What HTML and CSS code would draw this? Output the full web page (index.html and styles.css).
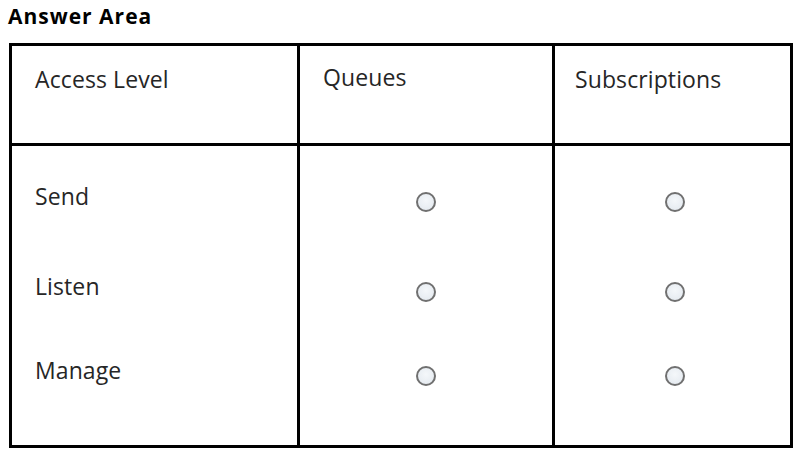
FILE: index.html
```html
<!DOCTYPE html>
<html>
<head>
<meta charset="utf-8">
<link rel="stylesheet" href="styles.css">
</head>
<body>
<h1 class="title">Answer Area</h1>
<div class="answer">
  <div class="cell head">Access Level</div>
  <div class="cell head col2 head-q">Queues</div>
  <div class="cell head col3">Subscriptions</div>

  <div class="cell label first">Send</div>
  <div class="cell col2 radio-cell first"><span class="radio"></span></div>
  <div class="cell col3 radio-cell first"><span class="radio"></span></div>

  <div class="cell label">Listen</div>
  <div class="cell col2 radio-cell"><span class="radio"></span></div>
  <div class="cell col3 radio-cell"><span class="radio"></span></div>

  <div class="cell label">Manage</div>
  <div class="cell col2 radio-cell"><span class="radio"></span></div>
  <div class="cell col3 radio-cell"><span class="radio"></span></div>
</div>
</body>
</html>
```

FILE: styles.css
```css
html, body {
  margin: 0;
  padding: 0;
  background: #fff;
}
body {
  font-family: "Open Sans", "Noto Sans", sans-serif;
  color: #222;
  width: 800px;
  height: 453px;
  overflow: hidden;
}
.title {
  margin: 2px 0 0 8px;
  font-size: 21px;
  line-height: 28px;
  font-weight: 700;
  color: #000;
  letter-spacing: 1px;
}
.answer {
  margin: 13px 0 0 9px;
  width: 778px;
  border: 3px solid #000;
  display: grid;
  grid-template-columns: 285px 255px 238px;
  grid-template-rows: 100px 125px 84px 90px;
}
.cell {
  box-sizing: border-box;
  font-size: 23px;
  line-height: 30px;
  padding-left: 23px;
  letter-spacing: 0.1px;
  color: #262626;
}
.col2, .col3 {
  border-left: 3px solid #000;
}
.col3 {
  padding-left: 20px;
}
.head {
  border-bottom: 3px solid #000;
  padding-top: 18px;
}
.head-q {
  padding-top: 16px;
}
.first {
  padding-top: 35px;
}
.radio-cell {
  display: flex;
  justify-content: center;
  align-items: flex-start;
  padding-left: 0;
}
.col3.radio-cell {
  padding-left: 4px;
}
.radio {
  margin-top: 11px;
  width: 20px;
  height: 20px;
  box-sizing: border-box;
  border: 2px solid #707070;
  border-radius: 50%;
  background: radial-gradient(circle at 50% 40%, #f4f7fa 0%, #e2e8ee 100%);
}
```
